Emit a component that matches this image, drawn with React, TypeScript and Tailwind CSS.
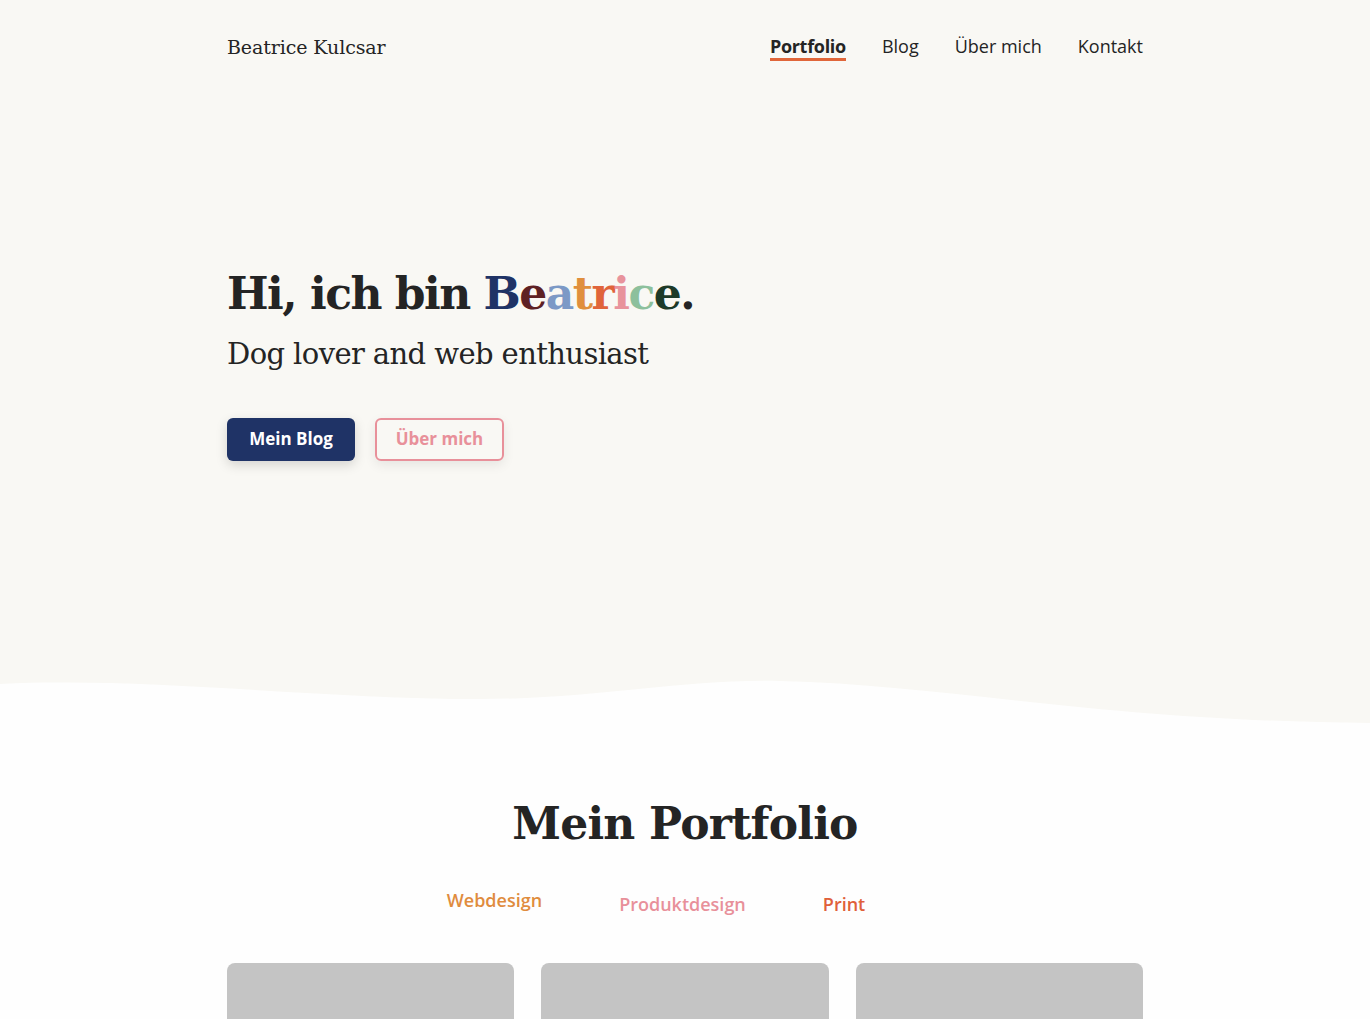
const serif = "font-['DejaVu_Serif',serif]";
const sans = "font-['Open_Sans',sans-serif]";

const nav = [
  { label: "Portfolio", active: true },
  { label: "Blog" },
  { label: "Über mich" },
  { label: "Kontakt" },
];

const name = [
  { ch: "B", color: "text-[#1f3366]" },
  { ch: "e", color: "text-[#5e2124]" },
  { ch: "a", color: "text-[#7c99c6]" },
  { ch: "t", color: "text-[#e08f3d]" },
  { ch: "r", color: "text-[#e0643a]" },
  { ch: "i", color: "text-[#e8939c]" },
  { ch: "c", color: "text-[#8dc09c]" },
  { ch: "e", color: "text-[#1d3a28]" },
];

const tabs = [
  { label: "Webdesign", color: "text-[#e08c3e]", offset: "" },
  { label: "Produktdesign", color: "text-[#e8909a]", offset: "mt-[4px]" },
  { label: "Print", color: "text-[#e0603a]", offset: "mt-[4px]" },
];

export default function App() {
  return (
    <div className="min-h-screen bg-[#fefefe] text-[#242424]">
      <section className="bg-[#f9f8f4]">
        <div className="mx-auto w-[916px]">
          <header className="flex items-center justify-between pt-[33px]">
            <a className={`${serif} text-[19px] tracking-[-0.1px]`}>Beatrice Kulcsar</a>
            <nav className={`${sans} flex gap-[36px] text-[18px] font-medium`}>
              {nav.map((n) => (
                <a
                  key={n.label}
                  className={
                    n.active
                      ? "border-b-[3px] border-[#e0663a] font-bold leading-[24px] tracking-[-0.3px]"
                      : "pb-[3px] leading-[24px]"
                  }
                >
                  {n.label}
                </a>
              ))}
            </nav>
          </header>

          <div className="pt-[202px] pb-[216px]">
            <h1 className={`${serif} text-[44px] font-bold leading-[60px] tracking-[-1.5px]`}>
              Hi, ich bin{" "}
              {name.map((l, i) => (
                <span key={i} className={l.color}>
                  {l.ch}
                </span>
              ))}
              .
            </h1>
            <p className={`${serif} mt-[10px] text-[29px] leading-[40px] tracking-[-0.6px]`}>
              Dog lover and web enthusiast
            </p>
            <div className={`${sans} mt-[44px] flex gap-[20px] text-[17px] font-bold`}>
              <a className="flex h-[43px] w-[128px] items-center justify-center rounded-[6px] bg-[#1f3366] text-white shadow-[0_4px_12px_rgba(0,0,0,0.15)]">
                Mein Blog
              </a>
              <a className="flex h-[43px] w-[129px] items-center justify-center rounded-[6px] border-2 border-[#e8909a] text-[#e8909a] shadow-[0_4px_12px_rgba(0,0,0,0.08)]">
                Über mich
              </a>
            </div>
          </div>
        </div>
        <svg
          className="block h-[50px] w-full"
          viewBox="0 0 1370 50"
          preserveAspectRatio="none"
        >
          <path
            d="M0,7 C150,0 320,22 480,22 C600,22 680,2 780,4 C950,8 1100,44 1370,46 L1370,50 L0,50 Z"
            fill="#fefefe"
          />
        </svg>
      </section>

      <section className="mx-auto w-[916px] pt-[67px]">
        <h2 className={`${serif} text-center text-[44px] font-bold leading-[60px] tracking-[-0.8px]`}>
          Mein Portfolio
        </h2>
        <div className={`${sans} mt-[33px] flex justify-center gap-[77px] pr-[58px] text-[18px] font-semibold`}>
          {tabs.map((t) => (
            <a key={t.label} className={`${t.color} ${t.offset}`}>
              {t.label}
            </a>
          ))}
        </div>
        <div className="mt-[45px] grid grid-cols-3 gap-[27px]">
          {[0, 1, 2].map((i) => (
            <div key={i} className="h-[260px] rounded-[8px] bg-[#c4c4c4]" />
          ))}
        </div>
      </section>
    </div>
  );
}
